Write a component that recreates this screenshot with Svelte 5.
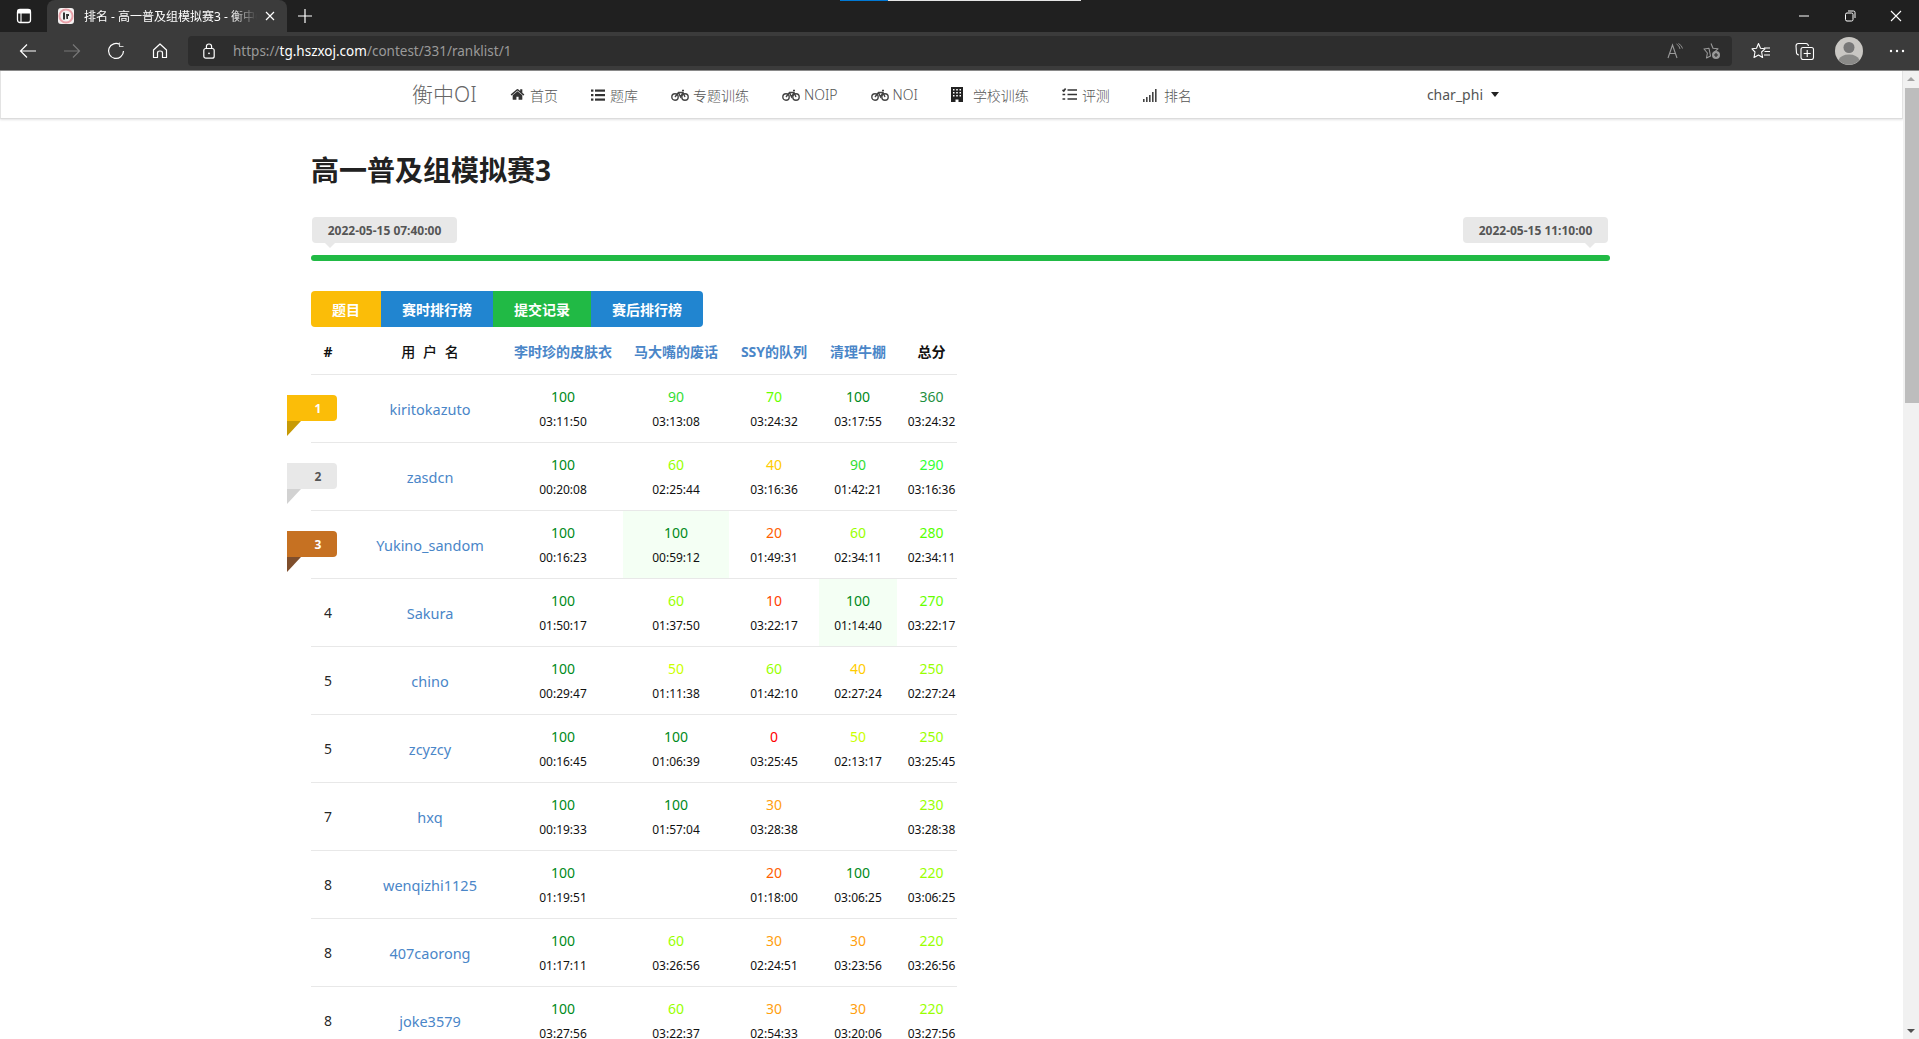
<script>
  const rows = [
    ['1','kiritokazuto',[[100,'03:11:50'],[90,'03:13:08'],[70,'03:24:32'],[100,'03:17:55'],[360,'03:24:32']]],
    ['2','zasdcn',[[100,'00:20:08'],[60,'02:25:44'],[40,'03:16:36'],[90,'01:42:21'],[290,'03:16:36']]],
    ['3','Yukino_sandom',[[100,'00:16:23'],[100,'00:59:12',1],[20,'01:49:31'],[60,'02:34:11'],[280,'02:34:11']]],
    ['4','Sakura',[[100,'01:50:17'],[60,'01:37:50'],[10,'03:22:17'],[100,'01:14:40',1],[270,'03:22:17']]],
    ['5','chino',[[100,'00:29:47'],[50,'01:11:38'],[60,'01:42:10'],[40,'02:27:24'],[250,'02:27:24']]],
    ['5','zcyzcy',[[100,'00:16:45'],[100,'01:06:39'],[0,'03:25:45'],[50,'02:13:17'],[250,'03:25:45']]],
    ['7','hxq',[[100,'00:19:33'],[100,'01:57:04'],[30,'03:28:38'],null,[230,'03:28:38']]],
    ['8','wenqizhi1125',[[100,'01:19:51'],null,[20,'01:18:00'],[100,'03:06:25'],[220,'03:06:25']]],
    ['8','407caorong',[[100,'01:17:11'],[60,'03:26:56'],[30,'02:24:51'],[30,'03:23:56'],[220,'03:26:56']]],
    ['8','joke3579',[[100,'03:27:56'],[60,'03:22:37'],[30,'02:54:33'],[30,'03:20:06'],[220,'03:27:56']]],
  ];
  const colors = {0:'#ff0000',10:'#ff4000',20:'#ff6000',30:'#ffa010',40:'#ffcc00',50:'#ccff00',60:'#99ff00',70:'#66ff00',90:'#33dd33',100:'#008a20',
    360:'#1f8f3f',290:'#33ff33',280:'#55ff00',270:'#66ff00',250:'#99ff00',230:'#99ff00',220:'#99ff00'};
  const problems = ['李时珍的皮肤衣','马大嘴的废话','SSY的队列','清理牛棚'];
</script>

{#snippet bike()}
  <svg class="ic bike" viewBox="0 0 18 12" fill="none" stroke="#444" stroke-width="1.4">
    <circle cx="4" cy="8" r="3.2"/><circle cx="14" cy="8" r="3.2"/>
    <path d="M4 8 L7.5 3.5 H12 L14 8 M7.5 3.5 L9.5 8 L12 3.5 M11 1.5 H13"/>
  </svg>
{/snippet}

<div class="window">
  <div class="tabbar">
    <span class="progress-a"></span><span class="progress-b"></span>
    <div class="tabicon">
      <svg viewBox="0 0 16 16" width="16" height="16" fill="none" stroke="#fff" stroke-width="1.3"><rect x="1.5" y="1.5" width="13" height="13" rx="2.5"/><path d="M1.5 5 H14.5 M5 5 V14.5" stroke-width="1.1"/><rect x="1.5" y="1.5" width="13" height="3.5" fill="#fff" stroke="none"/></svg>
    </div>
    <div class="tab">
      <svg class="favicon" viewBox="0 0 16 16" width="16" height="16"><rect width="16" height="16" rx="3" fill="#f3f0f0"/><circle cx="8" cy="8" r="6.6" fill="none" stroke="#e8a0a8" stroke-width="2"/><path d="M5 4.5 H7 V11.5 H5 Z M8 6 H11 V8 H10 V11 H8.4 Z" fill="#333"/></svg>
      <span class="tabtitle">排名 - 高一普及组模拟赛3 - 衡中OI</span>
      <svg class="tabclose" viewBox="0 0 10 10" width="10" height="10" stroke="#fff" stroke-width="1.2"><path d="M1 1 L9 9 M9 1 L1 9"/></svg>
    </div>
    <div class="plus"><svg viewBox="0 0 14 14" width="14" height="14" stroke="#fff" stroke-width="1.2"><path d="M7 0 V14 M0 7 H14"/></svg></div>
    <div class="winctl">
      <span><svg viewBox="0 0 12 12" width="12" height="12" stroke="#fff" stroke-width="1"><path d="M1 6 H11"/></svg></span>
      <span><svg viewBox="0 0 12 12" width="12" height="12" fill="none" stroke="#fff" stroke-width="1"><rect x="1.5" y="3" width="7.5" height="8" rx="1.5"/><path d="M4 1 H9.5 Q11 1 11 2.5 V8"/></svg></span>
      <span><svg viewBox="0 0 12 12" width="12" height="12" stroke="#fff" stroke-width="1.1"><path d="M1 1 L11 11 M11 1 L1 11"/></svg></span>
    </div>
  </div>

  <div class="toolbar">
    <div class="tb"><svg viewBox="0 0 18 16" width="18" height="16" fill="none" stroke="#fff" stroke-width="1.2"><path d="M17 8 H1.5 M8 1.5 L1.5 8 L8 14.5"/></svg></div>
    <div class="tb"><svg viewBox="0 0 18 16" width="18" height="16" fill="none" stroke="#777" stroke-width="1.2"><path d="M1 8 H16.5 M10 1.5 L16.5 8 L10 14.5"/></svg></div>
    <div class="tb"><svg viewBox="0 0 18 18" width="18" height="18" fill="none" stroke="#fff" stroke-width="1.2"><path d="M13 2.6 A7.5 7.5 0 1 0 16.5 9"/><path d="M12.5 0.5 V4.5 H16.5" stroke-width="1.1" stroke="#ccc"/></svg></div>
    <div class="tb"><svg viewBox="0 0 16 16" width="16" height="16" fill="none" stroke="#fff" stroke-width="1.2"><path d="M1.5 7 L8 1 L14.5 7 V14.5 H10.5 V10 Q10.5 8 8 8 Q5.5 8 5.5 10 V14.5 H1.5 Z" stroke-linejoin="round"/></svg></div>
    <div class="addr">
      <svg class="lock" viewBox="0 0 12 16" width="12" height="16" fill="none" stroke="#fff" stroke-width="1.2"><rect x="0.8" y="5.5" width="10.4" height="9.7" rx="2"/><path d="M3.4 5.5 V3.6 Q3.4 1 6 1 Q8.6 1 8.6 3.6 V5.5"/><circle cx="6" cy="10.3" r="0.9" fill="#fff" stroke="none"/></svg>
      <span class="url"><span>https://</span><b>tg.hszxoj.com</b><span>/contest/331/ranklist/1</span></span>
      <div class="addr-right">
        <svg viewBox="0 0 16 16" width="16" height="16" fill="none" stroke="#999" stroke-width="1.1"><path d="M1 15 L5.5 2 L10 15 M2.7 10.5 H8.3"/><path d="M9.5 1 Q12.5 2.5 13 6 M11.5 0.5 Q15 2.5 15.5 5.5" stroke-width=".9"/></svg>
        <svg viewBox="0 0 18 18" width="18" height="18" fill="none" stroke="#999" stroke-width="1.1"><path d="M8 1.5 L10 6.3 L15 6.8 L11.4 10.2 M7.5 14 L3.5 16 L4.4 11 L1 7 L6 6.3 Z" stroke-linejoin="round"/><circle cx="13" cy="13" r="4" fill="#999" stroke="none"/><path d="M13 11 V15 M11 13 H15" stroke="#2d2d2d"/></svg>
      </div>
    </div>
    <div class="tb first"><svg viewBox="0 0 20 18" width="20" height="18" fill="none" stroke="#fff" stroke-width="1.1"><path d="M7.5 1.5 L9.5 6.3 L14 6.8 L10.6 10 L11.6 15.5 L7.5 13 L3 15.5 L4 10 L1 6.8 L5.5 6.3 Z" stroke-linejoin="round"/><path d="M13 6 H19 M13.5 9.5 H19 M13 13 H19"/></svg></div>
    <div class="tb"><svg viewBox="0 0 20 18" width="20" height="18" fill="none" stroke="#fff" stroke-width="1.1"><path d="M4 13 Q2 13 1.5 11 L1 4 Q1 1.5 3.5 1.5 H11 Q13 1.5 13.5 4"/><rect x="6" y="5.5" width="12.5" height="12" rx="2"/><path d="M12.2 8 V15 M8.7 11.5 H15.7"/></svg></div>
    <div class="tb"><span class="avatar"><svg viewBox="0 0 28 28" width="28" height="28"><circle cx="14" cy="14" r="14" fill="#c9c7c3"/><circle cx="14" cy="10.5" r="5.5" fill="#777"/><path d="M3.5 23 Q6 17.5 14 17.5 Q22 17.5 24.5 23 A14 14 0 0 1 3.5 23 Z" fill="#8a8a88"/></svg></span></div>
    <div class="tb last"><svg viewBox="0 0 16 4" width="16" height="4" fill="#fff"><circle cx="2" cy="2" r="1.2"/><circle cx="8" cy="2" r="1.2"/><circle cx="14" cy="2" r="1.2"/></svg></div>
  </div>

  <div class="page">
    <div class="main">
      <nav class="nav">
        <span class="logo">衡中OI</span>
        <span class="item"><svg class="ic" width="15" height="15" viewBox="0 0 1792 1792" fill="#333"><path d="M1472 992v480q0 26-19 45t-45 19h-384v-384h-256v384h-384q-26 0-45-19t-19-45v-480q0-1 .5-3t.5-3l575-474 575 474q1 2 1 6zm223-69l-62 74q-8 9-21 11h-3q-13 0-21-7l-692-577-692 577q-12 8-24 7-13-2-21-11l-62-74q-8-10-7-23.5t11-21.5l719-599q32-26 76-26t76 26l244 204v-195q0-14 9-23t23-9h192q14 0 23 9t9 23v408l219 182q10 8 11 21.5t-7 23.5z"/></svg>首页</span>
        <span class="item"><svg class="ic" width="14" height="12" viewBox="0 0 14 12" fill="#333"><rect y="0.5" width="2.4" height="2.2"/><rect y="5" width="2.4" height="2.2"/><rect y="9.5" width="2.4" height="2.2"/><rect x="4" y="0.5" width="10" height="2.2"/><rect x="4" y="5" width="10" height="2.2"/><rect x="4" y="9.5" width="10" height="2.2"/></svg>题库</span>
        <span class="item">{@render bike()}专题训练</span>
        <span class="item">{@render bike()}NOIP</span>
        <span class="item">{@render bike()}NOI</span>
        <span class="item"><svg class="ic building" width="12" height="15" viewBox="0 0 12 15" fill="#222"><path fill-rule="evenodd" d="M0 0 H12 V15 H7.5 V12.5 H4.5 V15 H0 Z M2 2 V3.5 H3.5 V2 Z M5.2 2 V3.5 H6.8 V2 Z M8.5 2 V3.5 H10 V2 Z M2 5 V6.5 H3.5 V5 Z M5.2 5 V6.5 H6.8 V5 Z M8.5 5 V6.5 H10 V5 Z M2 8 V9.5 H3.5 V8 Z M5.2 8 V9.5 H6.8 V8 Z M8.5 8 V9.5 H10 V8 Z"/></svg>学校训练</span>
        <span class="item"><svg class="ic" width="15" height="13" viewBox="0 0 15 13" fill="none" stroke="#333" stroke-width="1.6"><path d="M0.5 2 L1.8 3 L3.6 0.6 M0.5 6.5 H3.2 M0.5 11 H3.2 M5.5 2 H15 M5.5 6.5 H15 M5.5 11 H15"/></svg>评测</span>
        <span class="item"><svg class="ic" width="16" height="14" viewBox="0 0 16 14" fill="#444"><rect x="0" y="11" width="1.6" height="3"/><rect x="3" y="9" width="1.6" height="5"/><rect x="6" y="7" width="1.6" height="7"/><rect x="9" y="4" width="1.6" height="10"/><rect x="12" y="1" width="1.6" height="13"/></svg>排名</span>
        <span class="user">char_phi<i class="caret"></i></span>
      </nav>

      <div class="content">
        <h1>高一普及组模拟赛3</h1>
        <div class="times">
          <span class="time left">2022-05-15 07:40:00</span>
          <span class="time right">2022-05-15 11:10:00</span>
        </div>
        <div class="bar"></div>
        <div class="buttons">
          <a class="yellow" href="#a">题目</a>
          <a class="blue" href="#b">赛时排行榜</a>
          <a class="green" href="#c">提交记录</a>
          <a class="blue" href="#d">赛后排行榜</a>
        </div>

        <table>
          <colgroup><col class="c0"/><col class="c1"/><col class="c2"/><col class="c3"/><col class="c4"/><col class="c5"/><col class="c6"/></colgroup>
          <thead>
            <tr>
              <th class="rank">#</th>
              <th class="uname">用 户 名</th>
              {#each problems as p}<th class="prob">{p}</th>{/each}
              <th class="total">总分</th>
            </tr>
          </thead>
          <tbody>
            {#each rows as [rank, name, cells]}
              <tr>
                <td class="rank">
                  {#if +rank <= 3}
                    <span class="ribbon r{rank}">{rank}</span>
                  {:else}
                    {rank}
                  {/if}
                </td>
                <td class="name">{name}</td>
                {#each cells as c, i}
                  <td class:hl={c && c[2]} class:total={i === 4}>
                    {#if c}
                      <div class="score" style="color:{colors[c[0]]}">{c[0]}</div>
                      <div class="when">{c[1]}</div>
                    {/if}
                  </td>
                {/each}
              </tr>
            {/each}
          </tbody>
        </table>
      </div>
    </div>

    <div class="scroll">
      <span class="arrow up"></span>
      <span class="thumb"></span>
      <span class="arrow down"></span>
    </div>
  </div>
</div>

<style>
  :global(body) { margin: 0; background: #fff; }
  .window { height: 1039px; overflow: hidden; display: flex; flex-direction: column; font-family: "Noto Sans", "Noto Sans CJK SC", sans-serif; }

  .tabbar { height: 32px; flex: none; background: #202020; display: flex; align-items: stretch; position: relative; }
  .progress-a, .progress-b { position: absolute; top: 0; height: 1px; }
  .progress-a { left: 840px; width: 48px; background: #0078d4; }
  .progress-b { left: 888px; width: 193px; background: #e6e6e6; }
  .tabicon { width: 47px; display: flex; align-items: center; justify-content: center; }
  .tab { width: 240px; background: #3b3b3b; border-radius: 8px 8px 0 0; display: flex; align-items: center; padding-left: 11px; box-sizing: border-box; }
  .favicon { flex: none; }
  .tabtitle { width: 173px; margin-left: 10px; font-size: 12px; color: #fff; white-space: nowrap; overflow: hidden; flex: none; mask-image: linear-gradient(to right, #000 85%, transparent); }
  .tabclose { margin-left: 8px; flex: none; }
  .plus { width: 36px; display: flex; align-items: center; justify-content: center; }
  .winctl { margin-left: auto; display: flex; }
  .winctl span { width: 46px; display: flex; align-items: center; justify-content: center; }

  .toolbar { height: 38px; flex: none; background: #3b3b3b; display: flex; align-items: center; padding-left: 6px; border-bottom: 1px solid #8a8a8a; }
  .tb { width: 44px; height: 38px; display: flex; align-items: center; justify-content: center; flex: none; }
  .tb.first { margin-left: 7px; }
  .tb.last { margin-left: 4px; }
  .avatar { display: flex; width: 28px; height: 28px; }
  .addr { flex: 1; height: 30px; margin-left: 6px; background: #2d2d2d; border-radius: 4px; display: flex; align-items: center; padding-left: 15px; min-width: 0; }
  .lock { flex: none; }
  .url { margin-left: 18px; font-size: 13.5px; color: #9a9a9a; white-space: nowrap; }
  .url b { font-weight: 400; color: #fff; }
  .addr-right { margin-left: auto; display: flex; gap: 20px; align-items: center; padding-right: 11px; }

  .page { flex: 1; min-height: 0; display: flex; }
  .main { flex: 1; min-width: 0; overflow: hidden; }
  .scroll { width: 16px; flex: none; background: #f1f1f1; display: flex; flex-direction: column; align-items: center; }
  .thumb { width: 14px; height: 315px; margin-left: 1px; background: #bdbdbd; }
  .arrow { flex: none; height: 17px; width: 16px; position: relative; }
  .arrow.down { margin-top: auto; }
  .arrow::after { content: ""; position: absolute; left: 4px; border-left: 4px solid transparent; border-right: 4px solid transparent; }
  .arrow.up::after { top: 6px; border-bottom: 4px solid #a3a3a3; }
  .arrow.down::after { bottom: 6px; border-top: 4px solid #505050; }

  .nav { height: 48px; box-sizing: border-box; display: flex; align-items: center; gap: 33px; padding-left: 412px; padding-right: 403px; background: #fff; font-size: 14px; color: #555; border: 1px solid #e3e3e3; border-top: 0; border-bottom: 1px solid #dcdcdc; box-shadow: 0 1px 2px rgba(34,36,38,.12); margin-right: 0; }
  .logo { font-size: 21px; font-weight: 300; color: #666; line-height: 1; margin-left: -1px; width: 65px; white-space: nowrap; }
  .item { display: flex; align-items: center; white-space: nowrap; font-weight: 300; }
  .ic { margin-right: 5px; flex: none; }
  .bike { width: 18px; height: 12px; margin-right: 4px; }
  .building { margin-right: 10px; }
  .user { margin-left: auto; display: flex; align-items: center; white-space: nowrap; font-weight: 400; }
  .caret { width: 0; height: 0; margin-left: 8px; border-left: 4px solid transparent; border-right: 4px solid transparent; border-top: 5px solid #222; }

  .content { padding: 33px 0 0 311px; width: 1299px; }
  h1 { margin: 0; font-size: 28px; line-height: 36px; font-weight: 700; color: #212121; }
  .times { margin-top: 29px; display: flex; justify-content: space-between; padding: 0 2px 0 1px; }
  .time { position: relative; height: 26px; width: 145px; background: #e8e8e8; border-radius: 4px; font-size: 12px; font-weight: 700; color: #555; display: flex; align-items: center; justify-content: center; white-space: nowrap; }
  .time::after { content: ""; position: absolute; top: 26px; border-left: 5px solid transparent; border-right: 5px solid transparent; border-top: 5px solid #e8e8e8; }
  .time.left::after { left: 13px; }
  .time.right::after { right: 13px; }
  .bar { margin-top: 12px; height: 6px; border-radius: 3px; background: #21ba45; }

  .buttons { margin-top: 30px; display: inline-flex; height: 36px; border-radius: 4px; overflow: hidden; vertical-align: top; }
  .buttons a { padding: 0 21px; display: flex; align-items: center; color: #fff; font-size: 14px; font-weight: 700; text-decoration: none; }
  .yellow { background: #fbbd08; }
  .blue { background: #2185d0; }
  .green { background: #21ba45; }

  table { display: table; width: 646px; margin-top: 1px; table-layout: fixed; border-collapse: separate; border-spacing: 0; font-size: 14px; color: rgba(0,0,0,.87); }
  .c0 { width: 46px; } .c1 { width: 146px; } .c2 { width: 120px; } .c3 { width: 106px; } .c4 { width: 90px; } .c5 { width: 78px; } .c6 { width: 60px; }
  th { height: 46px; padding: 0; border-bottom: 1px solid #e8e8e8; font-weight: 700; white-space: nowrap; text-align: center; font-size: 14px; color: #111; }
  th.prob { color: #4a86c8; font-size: 14px; }
  th.uname { font-weight: 500; word-spacing: 4px; }
  td { height: 67px; padding: 0; border-bottom: 1px solid #e8e8e8; text-align: center; white-space: nowrap; position: relative; }
  .rank { padding-right: 12px; }
  td.name { color: #4a86c8; font-size: 14.5px; }
  .total { padding-left: 9px; }
  .hl { background: #f4fff4; }
  .score { font-size: 14px; line-height: 25px; }
  .when { font-size: 12px; line-height: 25px; color: #111; }
  .ribbon { position: absolute; left: -24px; top: 20px; width: 50px; height: 26px; box-sizing: border-box; padding-left: 12px; border-radius: 0 4px 4px 0; font-size: 12px; font-weight: 700; color: #fff; display: flex; align-items: center; justify-content: center; }
  .ribbon::after { content: ""; position: absolute; left: 0; top: 26px; width: 0; height: 0; border-top: 15px solid; border-left: 14px solid transparent; border-top-color: inherit; transform: scaleX(-1); }
  .r1 { background: #fbbd08; border-top-color: #c79a05; }
  .r2 { background: #e8e8e8; color: #555; border-top-color: #d2d2d2; }
  .r3 { background: #c67122; border-top-color: #7f4e2c; }
</style>
